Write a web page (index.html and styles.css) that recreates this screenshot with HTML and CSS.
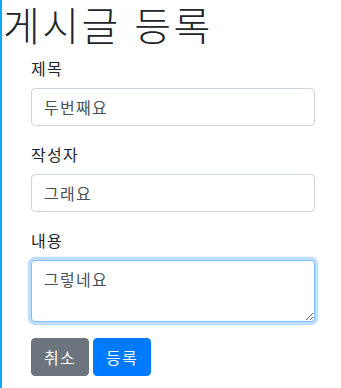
FILE: index.html
```html
<!DOCTYPE html>
<html lang="ko">
<head>
<meta charset="utf-8">
<title>게시글 등록</title>
<link rel="stylesheet" href="styles.css">
</head>
<body>
<div class="page">
  <h1 class="title">게시글 등록</h1>
  <form class="form">
    <div class="form-group">
      <label class="label">제목</label>
      <input class="control" type="text" value="두번째요">
    </div>
    <div class="form-group">
      <label class="label">작성자</label>
      <input class="control" type="text" value="그래요">
    </div>
    <div class="form-group">
      <label class="label">내용</label>
      <textarea class="control control-area is-focus" rows="2" autofocus>그렇네요</textarea>
    </div>
    <div class="actions">
      <button type="button" class="btn btn-secondary">취소</button>
      <button type="button" class="btn btn-primary">등록</button>
    </div>
  </form>
</div>
</body>
</html>
```

FILE: styles.css
```css
* { box-sizing: border-box; }
html, body { margin: 0; padding: 0; background: #fff; }
body {
  font-family: "Noto Sans CJK KR", "Noto Sans", sans-serif;
  font-size: 16px;
  line-height: 24px;
  color: #212529;
  letter-spacing: 0.08em;
}
.page {
  border-left: 2px solid #0aaaf5;
  min-height: 388px;
  padding-left: 1px;
}
.title {
  margin: 0 0 8px 0;
  font-size: 40px;
  line-height: 48px;
  font-weight: 300;
  letter-spacing: 0.06em;
}
.form {
  margin-left: 28px;
  width: 284px;
}
.form-group {
  margin-bottom: 16px;
}
.label {
  display: block;
  margin-bottom: 8px;
  line-height: 24px;
}
.control {
  display: block;
  width: 100%;
  height: 38px;
  padding: 6px 12px;
  font-family: inherit;
  font-size: 16px;
  line-height: 24px;
  letter-spacing: 0.08em;
  color: #495057;
  background: #fff;
  border: 1px solid #ced4da;
  border-radius: 4px;
  outline: none;
  margin: 0;
}
.control-area {
  height: 62px;
  resize: vertical;
}
.is-focus, .control:focus {
  border-color: #80bdff;
  box-shadow: 0 0 0 3.2px rgba(0, 123, 255, 0.25);
}
.actions {
  display: flex;
  gap: 4px;
}
.btn {
  font-family: inherit;
  font-size: 16px;
  line-height: 24px;
  letter-spacing: 0.08em;
  padding: 6px 12px;
  border: 1px solid transparent;
  border-radius: 4px;
  color: #fff;
  margin: 0;
}
.btn-secondary { background: #6c757d; border-color: #6c757d; }
.btn-primary { background: #007bff; border-color: #007bff; }
```
